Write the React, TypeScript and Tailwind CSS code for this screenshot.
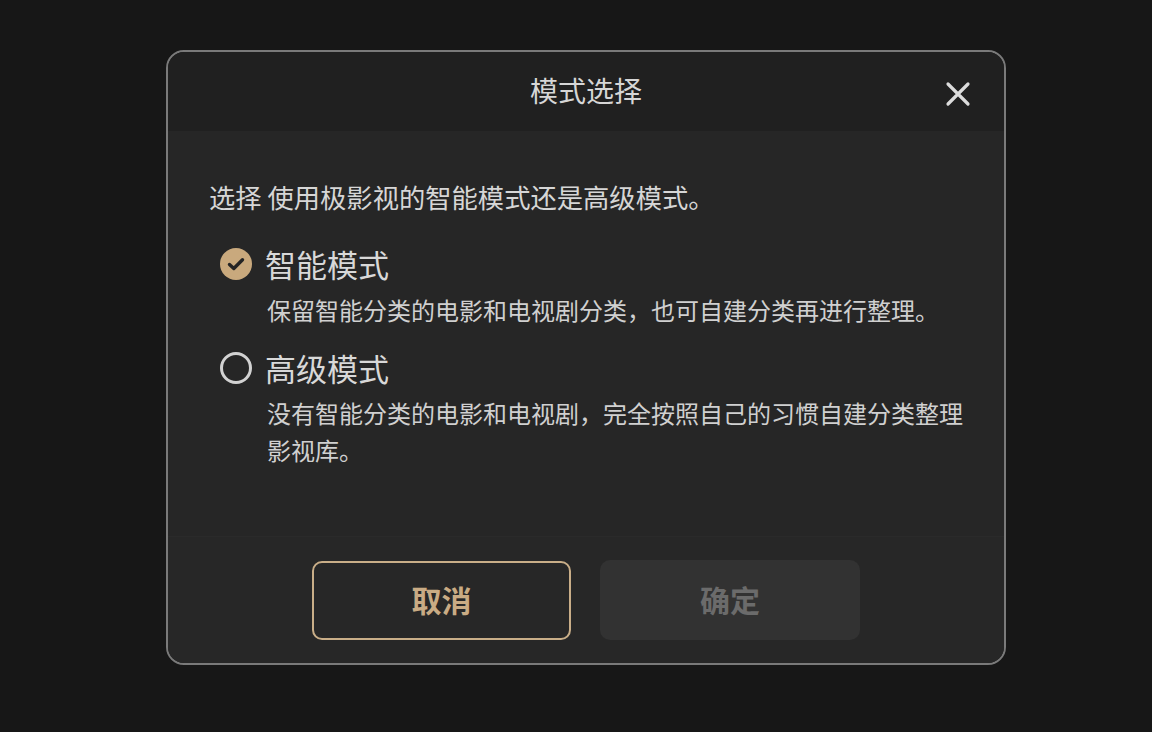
import React from "react";

function CheckedIcon() {
  return (
    <svg width="32" height="32" viewBox="0 0 32 32" className="shrink-0">
      <circle cx="16" cy="16" r="16" fill="#c9a97d" />
      <path d="M9.5 16.5 L13.8 20.5 L22.5 11.8" fill="none" stroke="#242424" strokeWidth="3.4" strokeLinecap="round" strokeLinejoin="round" />
    </svg>
  );
}

function UncheckedIcon() {
  return (
    <svg width="32" height="32" viewBox="0 0 32 32" className="shrink-0">
      <circle cx="16" cy="16" r="14.5" fill="none" stroke="#d2d2d2" strokeWidth="3" />
    </svg>
  );
}

export default function App() {
  return (
    <div
      className="min-h-[732px] w-full bg-[#171717] pl-[166px] pt-[50px]"
      style={{ fontFamily: '"Noto Sans CJK SC", "Noto Sans", sans-serif' }}
    >
      <div className="flex h-[615px] w-[840px] flex-col overflow-hidden rounded-[18px] border-2 border-[#7a7a7a] bg-[#262626]">
        <div className="relative flex h-[79px] shrink-0 items-center justify-center bg-[#202020]">
          <span className="-mt-[3px] text-[28px] leading-none text-[#d6d6d6]">模式选择</span>
          <button className="absolute right-[33px] top-[29px] flex h-[26px] w-[26px] items-center justify-center">
            <svg width="26" height="26" viewBox="0 0 26 26">
              <path d="M3 3 L23 23 M23 3 L3 23" stroke="#dcdcdc" strokeWidth="3.2" strokeLinecap="round" />
            </svg>
          </button>
        </div>
        <div className="flex flex-1 flex-col pl-[41px] pt-[48px]">
          <p className="text-[26.3px] leading-[36px] text-[#d6d6d6]">选择 使用极影视的智能模式还是高级模式。</p>
          <div className="mt-[29px] flex h-[40px] items-center gap-[13px] pl-[11px]">
            <CheckedIcon />
            <span className="text-[31px] leading-[40px] text-[#d8d8d8]">智能模式</span>
          </div>
          <p className="mt-[7px] pl-[58px] text-[24px] leading-[37px] text-[#d0d0d0]">
            保留智能分类的电影和电视剧分类，也可自建分类再进行整理。
          </p>
          <div className="mt-[20px] flex h-[40px] items-center gap-[13px] pl-[11px]">
            <UncheckedIcon />
            <span className="text-[31px] leading-[40px] text-[#d8d8d8]">高级模式</span>
          </div>
          <p className="mt-[6px] w-[770px] pl-[58px] text-[24px] leading-[37px] text-[#d0d0d0]">
            没有智能分类的电影和电视剧，完全按照自己的习惯自建分类整理影视库。
          </p>
        </div>
        <div className="flex h-[127px] shrink-0 items-center justify-center gap-[29px] border-t border-[#2a2a2a] bg-[#272727]">
          <button className="flex h-[79px] w-[259px] items-center justify-center rounded-[10px] border-2 border-[#c9ae88] bg-[#272727] pb-[2px] text-[30px] font-bold text-[#c9ab84]">
            取消
          </button>
          <button className="flex h-[80px] w-[260px] items-center justify-center rounded-[10px] bg-[#323232] pb-[2px] text-[30px] font-bold text-[#6b6b6b]">
            确定
          </button>
        </div>
      </div>
    </div>
  );
}
